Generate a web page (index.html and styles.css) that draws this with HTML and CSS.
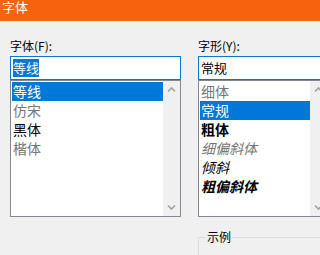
FILE: index.html
```html
<!DOCTYPE html>
<html lang="zh">
<head>
<meta charset="utf-8">
<title>字体</title>
<link rel="stylesheet" href="styles.css">
</head>
<body>
<div class="titlebar">字体</div>
<div class="dialog">
  <div class="col col-font">
    <div class="label">字体(F):</div>
    <div class="input"><span class="sel">等线</span></div>
    <div class="list">
      <ul class="items">
        <li class="item selected">等线</li>
        <li class="item thin">仿宋</li>
        <li class="item">黑体</li>
        <li class="item thin">楷体</li>
      </ul>
      <div class="scrollbar">
        <svg class="arrow" width="17" height="17" viewBox="0 0 17 17"><polyline points="5,10.5 8.5,7 12,10.5" /></svg>
        <svg class="arrow" width="17" height="17" viewBox="0 0 17 17"><polyline points="5,6.5 8.5,10 12,6.5" /></svg>
      </div>
    </div>
  </div>
  <div class="col col-style">
    <div class="label">字形(Y):</div>
    <div class="input"><span class="plain">常规</span></div>
    <div class="list">
      <ul class="items">
        <li class="item thin">细体</li>
        <li class="item selected">常规</li>
        <li class="item bold">粗体</li>
        <li class="item thin italic">细偏斜体</li>
        <li class="item italic">倾斜</li>
        <li class="item bold italic">粗偏斜体</li>
      </ul>
      <div class="scrollbar">
        <svg class="arrow" width="17" height="17" viewBox="0 0 17 17"><polyline points="5,10.5 8.5,7 12,10.5" /></svg>
        <svg class="arrow" width="17" height="17" viewBox="0 0 17 17"><polyline points="5,6.5 8.5,10 12,6.5" /></svg>
      </div>
    </div>
    <fieldset class="sample"><legend>示例</legend></fieldset>
  </div>
</div>
</body>
</html>
```
FILE: styles.css
```css
html, body {
  margin: 0;
  padding: 0;
  overflow: hidden;
  background: #f0f0f0;
  font-family: "Noto Sans CJK SC", "Noto Sans", sans-serif;
  color: #000;
}
.titlebar {
  height: 21px;
  background: #f7630c;
  color: #fff;
  font-size: 13px;
  line-height: 14px;
  padding-left: 2px;
  box-sizing: border-box;
}
.dialog {
  display: flex;
  gap: 17px;
  padding: 17px 0 0 10px;
  width: 400px;
}
.col {
  display: flex;
  flex-direction: column;
  flex-shrink: 0;
}
.col-font { width: 171px; }
.col-style { width: 130px; }
.label {
  font-size: 12px;
  line-height: 16px;
  height: 16px;
  margin-bottom: 2px;
  white-space: nowrap;
}
.input {
  height: 24px;
  box-sizing: border-box;
  border: 1px solid #0078d7;
  background: #fff;
  padding: 2px 0 0 2px;
  font-size: 13px;
}
.col-style .input { width: 140px; }
.sel, .plain {
  display: inline-block;
  height: 18px;
  line-height: 18px;
  vertical-align: top;
}
.sel {
  background: #0078d7;
  color: #fff;
}
.list {
  display: flex;
  height: 137px;
  box-sizing: border-box;
  border: 1px solid #828790;
  background: #fff;
}
.items {
  flex: 1;
  list-style: none;
  margin: 0;
  padding: 1px 0 0 1px;
}
.item {
  height: 19px;
  line-height: 19px;
  font-size: 14px;
  padding-left: 1px;
  white-space: nowrap;
}
.item.selected {
  background: #0078d7;
  color: #fff;
}
.item.thin { color: #767676; }
.item.bold { font-weight: 700; }
.item.italic { font-style: italic; }
.scrollbar {
  width: 17px;
  background: #f0f0f0;
  display: flex;
  flex-direction: column;
  justify-content: space-between;
}
.arrow {
  display: block;
  fill: none;
  stroke: #a3a3a3;
  stroke-width: 1.6;
}
.sample {
  margin: 12px 0 0 0;
  padding: 0 0 0 7px;
  border: 1px solid #dcdcdc;
  height: 60px;
  min-width: 0;
}
.sample legend {
  padding: 0 1px;
  font-size: 12px;
  line-height: 16px;
}
```
